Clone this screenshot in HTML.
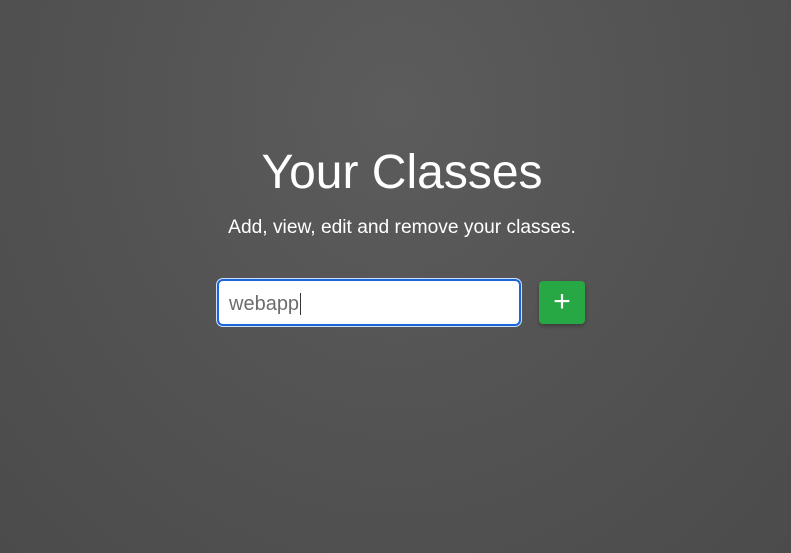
<!DOCTYPE html>
<html><head><style>
html,body{margin:0;width:791px;height:553px;overflow:hidden}
body{background:radial-gradient(ellipse at 50% 20%,#5c5c5c 0%,#535353 50%,#4b4b4b 100%);font-family:"Liberation Sans",sans-serif;color:#fff;position:relative}
h1{position:absolute;top:145px;left:0;width:804px;text-align:center;margin:0;font-weight:400;font-size:48px;line-height:56px}
p{position:absolute;top:217px;left:0;width:804px;text-align:center;margin:0;font-size:19.2px;line-height:22px}
.in{position:absolute;left:217px;top:279px;width:300px;height:43px;background:#fff;border:2px solid #1a66d6;border-radius:6px;box-shadow:0 0 0 1px #cfe0ff}
.in span{position:absolute;left:10px;top:12px;font-size:20px;color:#6c6c6c;line-height:22px;border-right:1px solid #333;padding-right:1px}
.btn{position:absolute;left:539px;top:281px;width:46px;height:43px;background:#28a745;border-radius:4px;box-shadow:0 2px 4px rgba(0,0,0,.3);color:#fff;font-size:30px;line-height:42px;text-align:center}
</style></head><body>
<h1>Your Classes</h1>
<p>Add, view, edit and remove your classes.</p>
<div class="in"><span>webapp</span></div>
<div class="btn">+</div>
</body></html>
